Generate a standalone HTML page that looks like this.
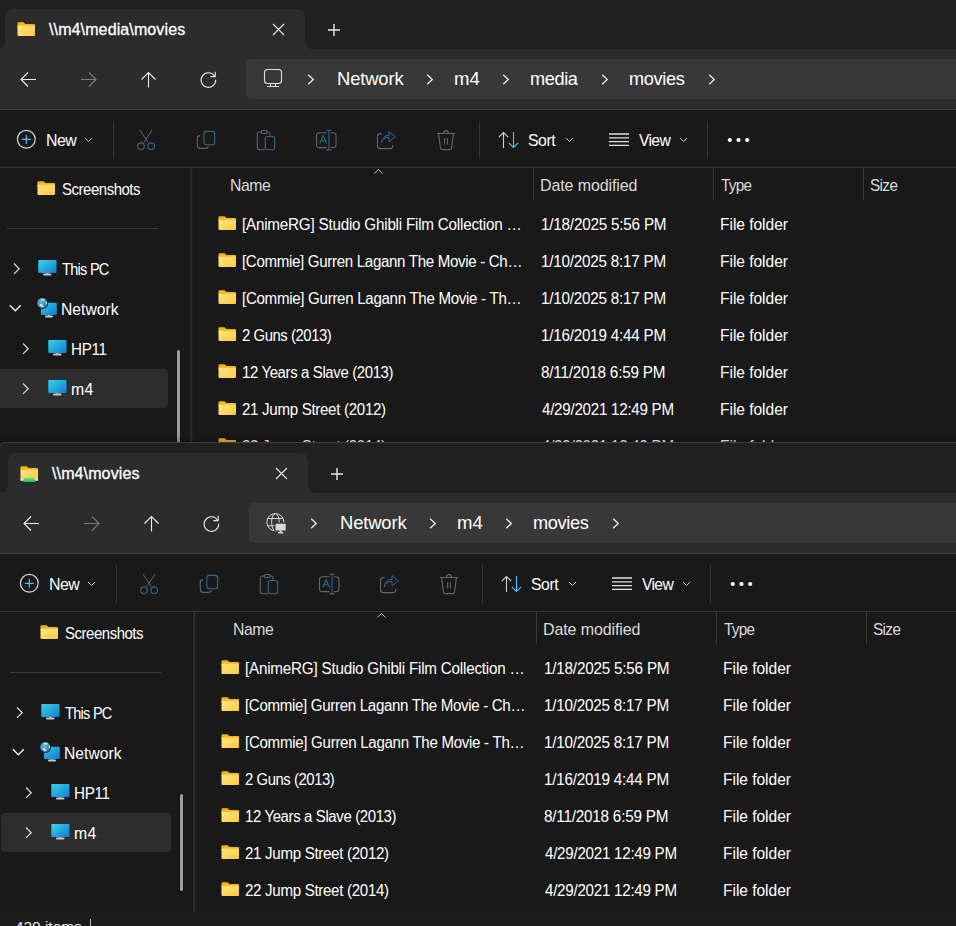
<!DOCTYPE html>
<html><head><meta charset="utf-8"><style>
html,body{margin:0;padding:0;width:956px;height:926px;overflow:hidden;background:#191919;}
.w{position:absolute;width:1100px;height:1100px;}
.b,.t,.s{position:absolute;}
.t{font-family:"Liberation Sans", sans-serif;white-space:pre;}
.s{overflow:visible;}
</style></head><body>
<div class="w" style="left:0px;top:0px"><div class="b" style="left:-5px;top:-2px;width:1100px;height:1100px;background:#202020;border-top:1px solid #3d3d3d;border-left:1px solid #3d3d3d;border-top-left-radius:8px;box-shadow:0 -2px 6px rgba(0,0,0,0.32);box-sizing:border-box"></div>
<div class="b" style="left:5px;top:9px;width:300px;height:40px;background:#2c2c2c;border-radius:8px 8px 0 0"></div>
<svg class="s" style="left:-3px;top:41px;" width="8" height="8" viewBox="0 0 8 8"><path d="M8 0 V8 H0 Q8 8 8 0Z" fill="#2c2c2c"/></svg>
<svg class="s" style="left:305px;top:41px;" width="8" height="8" viewBox="0 0 8 8"><path d="M0 0 V8 H8 Q0 8 0 0Z" fill="#2c2c2c"/></svg>
<svg class="s" style="left:17px;top:22px;" width="19" height="17" viewBox="0 0 19 17">
<defs><linearGradient id="fg0" x1="0" y1="0" x2="1" y2="1"><stop offset="0" stop-color="#ffe48e"/><stop offset="1" stop-color="#ffca38"/></linearGradient></defs>
<path d="M0.5 1.3 Q0.5 0.3 1.5 0.3 H6.6 L8.4 2.1 H17 Q18 2.1 18 3.1 V5 H0.5Z" fill="#f5b80a"/>
<path d="M0.5 3.7 H18 V13 Q18 14 17 14 H1.5 Q0.5 14 0.5 13Z" fill="url(#fg0)"/>
</svg>
<div class="t" style="left:49px;top:21.26px;font-size:16px;line-height:18.4px;color:#ffffff;font-weight:400;letter-spacing:0.12px;-webkit-text-stroke:0.3px #fff;">\\m4\media\movies</div>
<svg class="s" style="left:272px;top:23px;" width="13" height="13" viewBox="0 0 13 13"><path d="M1 1 L12 12 M12 1 L1 12" stroke="#e6e6e6" stroke-width="1.1"/></svg>
<svg class="s" style="left:328px;top:24px;" width="13" height="13" viewBox="0 0 13 13"><path d="M6 0 V12 M0 6 H12" stroke="#e6e6e6" stroke-width="1.4"/></svg>
<div class="b" style="left:-3px;top:49px;width:1100px;height:60px;background:#2c2c2c;"></div>
<div class="b" style="left:-3px;top:109px;width:1100px;height:1px;background:#3c3c3c;"></div>
<svg class="s" style="left:20px;top:71px;" width="17" height="16" viewBox="0 0 17 16"><path d="M1.5 8.5 H16 M8 1.5 L1 8.5 L8 15.5" stroke="#ececec" stroke-width="1.1" fill="none"/></svg>
<svg class="s" style="left:80px;top:71px;" width="17" height="16" viewBox="0 0 17 16"><path d="M15.5 8.5 H1 M9 1.5 L16 8.5 L9 15.5" stroke="#7a7a7a" stroke-width="1.1" fill="none"/></svg>
<svg class="s" style="left:140px;top:71px;" width="16" height="17" viewBox="0 0 16 17"><path d="M8.5 1.5 V16.5 M1.5 8.5 L8.5 1.5 L15.5 8.5" stroke="#ececec" stroke-width="1.1" fill="none"/></svg>
<svg class="s" style="left:199px;top:70px;" width="19" height="19" viewBox="0 0 19 19"><path d="M15.6 6.2 A7.3 7.3 0 1 0 16.7 9.6" stroke="#ececec" stroke-width="1.1" fill="none"/><path d="M16.2 1.8 V6.6 H11.4" stroke="#ececec" stroke-width="1.1" fill="none"/></svg>
<div class="b" style="left:246px;top:58.5px;width:900px;height:40px;background:#383838;border-radius:5px"></div>
<svg class="s" style="left:263px;top:68px;" width="20" height="20" viewBox="0 0 20 20"><g stroke="#e0e0e0" stroke-width="1.1" fill="none"><rect x="1.5" y="1.5" width="17" height="14" rx="3"/><path d="M7.5 15.5 V18.5 M12.5 15.5 V18.5 M4 18.5 H16"/></g></svg>
<svg class="s" style="left:307px;top:74px;" width="8" height="11" viewBox="0 0 8 11"><path d="M1.2 0.8 L6.3 5.5 L1.2 10.2" stroke="#ececec" stroke-width="1.3" fill="none"/></svg>
<div class="t" style="left:337.32px;top:67.86px;font-size:18.6px;line-height:21.39px;color:#ffffff;font-weight:400;letter-spacing:-0.143px;transform:scaleX(0.9896);transform-origin:0 0;">Network</div>
<svg class="s" style="left:426px;top:74px;" width="8" height="11" viewBox="0 0 8 11"><path d="M1.2 0.8 L6.3 5.5 L1.2 10.2" stroke="#ececec" stroke-width="1.3" fill="none"/></svg>
<div class="t" style="left:454.35px;top:67.86px;font-size:18.6px;line-height:21.39px;color:#ffffff;font-weight:400;letter-spacing:-0.056px;transform:scaleX(0.9981);transform-origin:0 0;">m4</div>
<svg class="s" style="left:502px;top:74px;" width="8" height="11" viewBox="0 0 8 11"><path d="M1.2 0.8 L6.3 5.5 L1.2 10.2" stroke="#ececec" stroke-width="1.3" fill="none"/></svg>
<div class="t" style="left:530.08px;top:67.86px;font-size:18.6px;line-height:21.39px;color:#ffffff;font-weight:400;letter-spacing:-0.38px;transform:scaleX(0.9755);transform-origin:0 0;">media</div>
<svg class="s" style="left:601px;top:74px;" width="8" height="11" viewBox="0 0 8 11"><path d="M1.2 0.8 L6.3 5.5 L1.2 10.2" stroke="#ececec" stroke-width="1.3" fill="none"/></svg>
<div class="t" style="left:628.78px;top:67.86px;font-size:18.6px;line-height:21.39px;color:#ffffff;font-weight:400;letter-spacing:-0.338px;transform:scaleX(0.9763);transform-origin:0 0;">movies</div>
<svg class="s" style="left:708px;top:74px;" width="8" height="11" viewBox="0 0 8 11"><path d="M1.2 0.8 L6.3 5.5 L1.2 10.2" stroke="#ececec" stroke-width="1.3" fill="none"/></svg>
<div class="b" style="left:-3px;top:110px;width:1100px;height:57px;background:#191919;"></div>
<div class="b" style="left:-3px;top:167px;width:1100px;height:1px;background:#393939;"></div>
<svg class="s" style="left:16px;top:129px;" width="21" height="21" viewBox="0 0 21 21"><circle cx="10.3" cy="10.3" r="8.9" stroke="#d6d6d6" stroke-width="1.2" fill="none"/><path d="M10.3 5.9 V14.7 M5.9 10.3 H14.7" stroke="#4cc2ff" stroke-width="1.2"/></svg>
<div class="t" style="left:46.39px;top:131.39px;font-size:16.4px;line-height:18.86px;color:#ffffff;font-weight:400;letter-spacing:-0.596px;transform:scaleX(0.9700);transform-origin:0 0;">New</div>
<svg class="s" style="left:84px;top:137px;" width="9" height="6" viewBox="0 0 9 6"><path d="M1 1 L4.5 4.5 L8 1" stroke="#c8c8c8" stroke-width="1" fill="none"/></svg>
<div class="b" style="left:113px;top:121px;width:1px;height:38px;background:#333333;"></div>
<svg class="s" style="left:136px;top:129px;" width="20" height="22" viewBox="0 0 20 22"><path d="M3.9 1 L12 13.3 M16.1 1 L8 13.3" stroke="#666666" stroke-width="1"/><circle cx="5" cy="17.2" r="3.3" stroke="#2f6a8e" stroke-width="1.1" fill="none"/><circle cx="15.2" cy="17.2" r="3.3" stroke="#2f6a8e" stroke-width="1.1" fill="none"/></svg>
<svg class="s" style="left:196px;top:130px;" width="20" height="20" viewBox="0 0 20 20"><path d="M4 5.6 Q1.3 5.8 1.3 8.6 V15.6 Q1.3 18.4 4.2 18.4 H9.5 Q12 18.4 12.3 16" stroke="#666666" stroke-width="1.1" fill="none"/><rect x="7.9" y="1.4" width="10.8" height="13.4" rx="2.6" stroke="#2f6a8e" stroke-width="1.1" fill="none"/></svg>
<svg class="s" style="left:256px;top:129px;" width="20" height="22" viewBox="0 0 20 22"><path d="M5 3 H3.2 Q1.3 3 1.3 5 V18.6 Q1.3 20.7 3.3 20.7 H8.7 M14 6.8 V5 Q14 3 12.2 3 H10.5" stroke="#666666" stroke-width="1.1" fill="none"/><rect x="5.2" y="1.5" width="6" height="3" rx="1.5" stroke="#666666" stroke-width="1.1" fill="none"/><rect x="9.2" y="7.5" width="9.5" height="13.2" rx="2.4" stroke="#2f6a8e" stroke-width="1.1" fill="none"/></svg>
<svg class="s" style="left:315px;top:129px;" width="22" height="22" viewBox="0 0 22 22"><path d="M11.5 18.6 H4.7 Q1.5 18.6 1.5 15.4 V7 Q1.5 3.8 4.7 3.8 H11.5 M16 3.8 H17.8 Q21 3.8 21 7 V15.4 Q21 18.6 17.8 18.6 H16" stroke="#666666" stroke-width="1.1" fill="none"/><path d="M4.8 14.5 L8.2 6.6 L11.6 14.5 M6.2 11.8 H10.3 M14 1.5 V20.8 M11.4 1.3 H16.6 M11.4 20.9 H16.6" stroke="#2f6a8e" stroke-width="1.1" fill="none"/></svg>
<svg class="s" style="left:376px;top:129px;" width="21" height="21" viewBox="0 0 21 21"><path d="M5.5 4.6 H4.2 Q1.5 4.6 1.5 7.3 V17 Q1.5 19.6 4.2 19.6 H14.1 Q16.8 19.6 16.8 17 V16" stroke="#666666" stroke-width="1.1" fill="none"/><path d="M5.3 13.8 Q7 8.2 13 8.3 V12.8 L19.4 7.8 L13 2.6 V6.3 Q6.6 6.6 5.3 13.8Z" stroke="#2f6a8e" stroke-width="1" fill="none" stroke-linejoin="round"/></svg>
<svg class="s" style="left:436px;top:129px;" width="20" height="22" viewBox="0 0 20 22"><path d="M1 4.5 H19 M7.6 4.3 Q7.6 1.6 10 1.6 Q12.4 1.6 12.4 4.3 M2.6 4.5 L4.4 19 Q4.6 20.6 6.2 20.6 H13.8 Q15.4 20.6 15.6 19 L17.4 4.5 M8.6 9.3 V15.6 M11.4 9.3 V15.6" stroke="#666666" stroke-width="1.1" fill="none"/></svg>
<div class="b" style="left:479px;top:121px;width:1px;height:38px;background:#333333;"></div>
<svg class="s" style="left:497px;top:131px;" width="24" height="18" viewBox="0 0 24 18"><path d="M6.5 17 V1.5 M1.8 6.2 L6.5 1.5 L11.2 6.2" stroke="#d0d0d0" stroke-width="1.1" fill="none"/><path d="M16.5 1 V16.5 M11.8 11.8 L16.5 16.5 L21.2 11.8" stroke="#4cc2ff" stroke-width="1.1" fill="none"/></svg>
<div class="t" style="left:528.48px;top:131.39px;font-size:16.4px;line-height:18.86px;color:#ffffff;font-weight:400;letter-spacing:-0.447px;transform:scaleX(0.9639);transform-origin:0 0;">Sort</div>
<svg class="s" style="left:565px;top:137px;" width="9" height="6" viewBox="0 0 9 6"><path d="M1 1 L4.5 4.5 L8 1" stroke="#c8c8c8" stroke-width="1" fill="none"/></svg>
<svg class="s" style="left:608px;top:132px;" width="22" height="16" viewBox="0 0 22 16"><path d="M1 2 H21 M1 5.8 H21 M1 9.6 H21 M1 13.4 H21" stroke="#e0e0e0" stroke-width="1.3"/></svg>
<div class="t" style="left:639.1px;top:131.39px;font-size:16.4px;line-height:18.86px;color:#ffffff;font-weight:400;letter-spacing:-0.682px;transform:scaleX(0.9547);transform-origin:0 0;">View</div>
<svg class="s" style="left:679px;top:137px;" width="9" height="6" viewBox="0 0 9 6"><path d="M1 1 L4.5 4.5 L8 1" stroke="#c8c8c8" stroke-width="1" fill="none"/></svg>
<div class="b" style="left:707px;top:121px;width:1px;height:38px;background:#333333;"></div>
<svg class="s" style="left:727px;top:137px;" width="23" height="6" viewBox="0 0 23 6"><circle cx="2.8" cy="3" r="2.1" fill="#ffffff"/><circle cx="11.5" cy="3" r="2.1" fill="#ffffff"/><circle cx="20.2" cy="3" r="2.1" fill="#ffffff"/></svg>
<div class="b" style="left:-3px;top:168px;width:1100px;height:1000px;background:#191919;"></div>
<div class="b" style="left:189px;top:168px;width:1px;height:1000px;background:#161616;"></div>
<div class="b" style="left:190px;top:168px;width:2px;height:1000px;background:#2a2a2a;"></div>
<div class="b" style="left:192px;top:168px;width:2px;height:1000px;background:#1e1e1e;"></div>
<svg class="s" style="left:37px;top:181px;" width="19" height="17" viewBox="0 0 19 17">
<defs><linearGradient id="fg0" x1="0" y1="0" x2="1" y2="1"><stop offset="0" stop-color="#ffe48e"/><stop offset="1" stop-color="#ffca38"/></linearGradient></defs>
<path d="M0.5 1.3 Q0.5 0.3 1.5 0.3 H6.6 L8.4 2.1 H17 Q18 2.1 18 3.1 V5 H0.5Z" fill="#f5b80a"/>
<path d="M0.5 3.7 H18 V13 Q18 14 17 14 H1.5 Q0.5 14 0.5 13Z" fill="url(#fg0)"/>
</svg>
<div class="t" style="left:61.58px;top:181.12px;font-size:15.6px;line-height:17.94px;color:#ffffff;font-weight:400;letter-spacing:-0.465px;transform:scaleX(0.9574);transform-origin:0 0;">Screenshots</div>
<div class="b" style="left:7px;top:228px;width:151px;height:1px;background:#3a3a3a;"></div>
<svg class="s" style="left:12px;top:262px;" width="10" height="14" viewBox="0 0 10 14"><path d="M2 1.5 L7.2 6.7 L2 11.9" stroke="#d4d4d4" stroke-width="1.3" fill="none"/></svg>
<svg class="s" style="left:37.5px;top:260px;" width="19" height="16" viewBox="0 0 19 16">
<defs><linearGradient id="mg" x1="0" y1="0" x2="1" y2="1"><stop offset="0" stop-color="#38d4ea"/><stop offset="1" stop-color="#137ad0"/></linearGradient></defs>
<rect x="0.3" y="0" width="18.2" height="13" rx="0.8" fill="url(#mg)"/>
<rect x="8.3" y="13" width="2" height="1.5" fill="#b8b8b8"/>
<rect x="5" y="13.6" width="8.5" height="2" rx="1" fill="#c8c8c8"/></svg>
<div class="t" style="left:62.07px;top:261.12px;font-size:15.6px;line-height:17.94px;color:#ffffff;font-weight:400;letter-spacing:-0.785px;transform:scaleX(0.9339);transform-origin:0 0;">This PC</div>
<svg class="s" style="left:8px;top:303px;" width="14" height="10" viewBox="0 0 14 10"><path d="M1.8 2.2 L7.3 7.7 L12.8 2.2" stroke="#ececec" stroke-width="1.4" fill="none"/></svg>
<svg class="s" style="left:37px;top:298px;" width="21" height="21" viewBox="0 0 21 21">
<defs><linearGradient id="ng" x1="0" y1="0" x2="1" y2="1"><stop offset="0" stop-color="#2fc6e6"/><stop offset="1" stop-color="#137ad0"/></linearGradient>
<radialGradient id="gl" cx="0.4" cy="0.35" r="0.7"><stop offset="0" stop-color="#6ab8e0"/><stop offset="1" stop-color="#2b76a8"/></radialGradient></defs>
<rect x="4" y="4.8" width="15.8" height="12.2" rx="0.8" fill="url(#ng)"/>
<rect x="11" y="17" width="1.6" height="1.5" fill="#b8b8b8"/>
<rect x="8" y="17.4" width="8" height="2" rx="1" fill="#c8c8c8"/>
<circle cx="5.6" cy="5.4" r="5.4" fill="#1a1a1a"/>
<circle cx="5.3" cy="5.2" r="5.1" fill="url(#gl)"/>
<path d="M2.5 6.5 Q4 5.5 5.5 7 L6.5 9 Q4.5 9.5 2.5 7.5Z M4 1 Q6 0.6 8 1.5 L7 2.8 Q5.5 2 4 2.2Z M8.8 3 L10 4.5 L9.5 6.5 L8.6 5Z" fill="#e8f2f8" opacity="0.9"/></svg>
<div class="t" style="left:61.04px;top:301.12px;font-size:15.6px;line-height:17.94px;color:#ffffff;font-weight:400;letter-spacing:0.046px;transform:scaleX(1.0040);transform-origin:0 0;">Network</div>
<div class="b" style="left:-2px;top:368.5px;width:170px;height:39px;background:#2d2d2d;border-radius:4px"></div>
<svg class="s" style="left:21px;top:342px;" width="10" height="14" viewBox="0 0 10 14"><path d="M2 1.5 L7.2 6.7 L2 11.9" stroke="#d4d4d4" stroke-width="1.3" fill="none"/></svg>
<svg class="s" style="left:47.5px;top:340px;" width="19" height="16" viewBox="0 0 19 16">
<defs><linearGradient id="mg" x1="0" y1="0" x2="1" y2="1"><stop offset="0" stop-color="#38d4ea"/><stop offset="1" stop-color="#137ad0"/></linearGradient></defs>
<rect x="0.3" y="0" width="18.2" height="13" rx="0.8" fill="url(#mg)"/>
<rect x="8.3" y="13" width="2" height="1.5" fill="#b8b8b8"/>
<rect x="5" y="13.6" width="8.5" height="2" rx="1" fill="#c8c8c8"/></svg>
<div class="t" style="left:70.98px;top:341.12px;font-size:15.6px;line-height:17.94px;color:#ffffff;font-weight:400;letter-spacing:-0.357px;transform:scaleX(0.9762);transform-origin:0 0;">HP11</div>
<svg class="s" style="left:21px;top:382px;" width="10" height="14" viewBox="0 0 10 14"><path d="M2 1.5 L7.2 6.7 L2 11.9" stroke="#d4d4d4" stroke-width="1.3" fill="none"/></svg>
<svg class="s" style="left:47.5px;top:380px;" width="19" height="16" viewBox="0 0 19 16">
<defs><linearGradient id="mg" x1="0" y1="0" x2="1" y2="1"><stop offset="0" stop-color="#38d4ea"/><stop offset="1" stop-color="#137ad0"/></linearGradient></defs>
<rect x="0.3" y="0" width="18.2" height="13" rx="0.8" fill="url(#mg)"/>
<rect x="8.3" y="13" width="2" height="1.5" fill="#b8b8b8"/>
<rect x="5" y="13.6" width="8.5" height="2" rx="1" fill="#c8c8c8"/></svg>
<div class="t" style="left:71.19px;top:381.12px;font-size:15.6px;line-height:17.94px;color:#ffffff;font-weight:400;letter-spacing:0.352px;transform:scaleX(1.0144);transform-origin:0 0;">m4</div>
<div class="b" style="left:177px;top:350px;width:3px;height:97px;background:#9c9c9c;border-radius:1.5px"></div>
<svg class="s" style="left:373px;top:168px;" width="12" height="7" viewBox="0 0 12 7"><path d="M1.2 5.6 L5.4 1.4 L9.6 5.6" stroke="#b8b8b8" stroke-width="1" fill="none"/></svg>
<div class="t" style="left:230.38px;top:175.57px;font-size:16.2px;line-height:18.63px;color:#d9d9d9;font-weight:400;letter-spacing:-0.442px;transform:scaleX(0.9743);transform-origin:0 0;">Name</div>
<div class="b" style="left:533px;top:168px;width:1px;height:32px;background:#393939;"></div>
<div class="t" style="left:540.36px;top:175.57px;font-size:16.2px;line-height:18.63px;color:#d9d9d9;font-weight:400;letter-spacing:-0.109px;transform:scaleX(0.9892);transform-origin:0 0;">Date modified</div>
<div class="b" style="left:713px;top:168px;width:1px;height:32px;background:#393939;"></div>
<div class="t" style="left:721.26px;top:175.57px;font-size:16.2px;line-height:18.63px;color:#d9d9d9;font-weight:400;letter-spacing:-0.805px;transform:scaleX(0.9455);transform-origin:0 0;">Type</div>
<div class="b" style="left:863px;top:168px;width:1px;height:32px;background:#393939;"></div>
<div class="t" style="left:870.39px;top:175.57px;font-size:16.2px;line-height:18.63px;color:#d9d9d9;font-weight:400;letter-spacing:-0.677px;transform:scaleX(0.9475);transform-origin:0 0;">Size</div>
<svg class="s" style="left:217.5px;top:215.5px;" width="19" height="17" viewBox="0 0 19 17">
<defs><linearGradient id="fg0" x1="0" y1="0" x2="1" y2="1"><stop offset="0" stop-color="#ffe48e"/><stop offset="1" stop-color="#ffca38"/></linearGradient></defs>
<path d="M0.5 1.3 Q0.5 0.3 1.5 0.3 H6.6 L8.4 2.1 H17 Q18 2.1 18 3.1 V5 H0.5Z" fill="#f5b80a"/>
<path d="M0.5 3.7 H18 V13 Q18 14 17 14 H1.5 Q0.5 14 0.5 13Z" fill="url(#fg0)"/>
</svg>
<div class="t" style="left:241.92px;top:215.62px;font-size:15.6px;line-height:17.94px;color:#ffffff;font-weight:400;letter-spacing:-0.221px;transform:scaleX(0.9758);transform-origin:0 0;">[AnimeRG] Studio Ghibli Film Collection …</div>
<div class="t" style="left:540.68px;top:215.62px;font-size:15.6px;line-height:17.94px;color:#ffffff;font-weight:400;letter-spacing:-0.216px;transform:scaleX(0.9786);transform-origin:0 0;">1/18/2025 5:56 PM</div>
<div class="t" style="left:720.25px;top:215.62px;font-size:15.6px;line-height:17.94px;color:#ffffff;font-weight:400;letter-spacing:-0.028px;transform:scaleX(0.9966);transform-origin:0 0;">File folder</div>
<svg class="s" style="left:217.5px;top:252.5px;" width="19" height="17" viewBox="0 0 19 17">
<defs><linearGradient id="fg0" x1="0" y1="0" x2="1" y2="1"><stop offset="0" stop-color="#ffe48e"/><stop offset="1" stop-color="#ffca38"/></linearGradient></defs>
<path d="M0.5 1.3 Q0.5 0.3 1.5 0.3 H6.6 L8.4 2.1 H17 Q18 2.1 18 3.1 V5 H0.5Z" fill="#f5b80a"/>
<path d="M0.5 3.7 H18 V13 Q18 14 17 14 H1.5 Q0.5 14 0.5 13Z" fill="url(#fg0)"/>
</svg>
<div class="t" style="left:241.93px;top:252.62px;font-size:15.6px;line-height:17.94px;color:#ffffff;font-weight:400;letter-spacing:-0.332px;transform:scaleX(0.9675);transform-origin:0 0;">[Commie] Gurren Lagann The Movie - Ch…</div>
<div class="t" style="left:540.68px;top:252.62px;font-size:15.6px;line-height:17.94px;color:#ffffff;font-weight:400;letter-spacing:-0.227px;transform:scaleX(0.9775);transform-origin:0 0;">1/10/2025 8:17 PM</div>
<div class="t" style="left:720.25px;top:252.62px;font-size:15.6px;line-height:17.94px;color:#ffffff;font-weight:400;letter-spacing:-0.028px;transform:scaleX(0.9966);transform-origin:0 0;">File folder</div>
<svg class="s" style="left:217.5px;top:289.5px;" width="19" height="17" viewBox="0 0 19 17">
<defs><linearGradient id="fg0" x1="0" y1="0" x2="1" y2="1"><stop offset="0" stop-color="#ffe48e"/><stop offset="1" stop-color="#ffca38"/></linearGradient></defs>
<path d="M0.5 1.3 Q0.5 0.3 1.5 0.3 H6.6 L8.4 2.1 H17 Q18 2.1 18 3.1 V5 H0.5Z" fill="#f5b80a"/>
<path d="M0.5 3.7 H18 V13 Q18 14 17 14 H1.5 Q0.5 14 0.5 13Z" fill="url(#fg0)"/>
</svg>
<div class="t" style="left:241.93px;top:289.62px;font-size:15.6px;line-height:17.94px;color:#ffffff;font-weight:400;letter-spacing:-0.314px;transform:scaleX(0.9690);transform-origin:0 0;">[Commie] Gurren Lagann The Movie - Th…</div>
<div class="t" style="left:540.68px;top:289.62px;font-size:15.6px;line-height:17.94px;color:#ffffff;font-weight:400;letter-spacing:-0.227px;transform:scaleX(0.9775);transform-origin:0 0;">1/10/2025 8:17 PM</div>
<div class="t" style="left:720.25px;top:289.62px;font-size:15.6px;line-height:17.94px;color:#ffffff;font-weight:400;letter-spacing:-0.028px;transform:scaleX(0.9966);transform-origin:0 0;">File folder</div>
<svg class="s" style="left:217.5px;top:326.5px;" width="19" height="17" viewBox="0 0 19 17">
<defs><linearGradient id="fg0" x1="0" y1="0" x2="1" y2="1"><stop offset="0" stop-color="#ffe48e"/><stop offset="1" stop-color="#ffca38"/></linearGradient></defs>
<path d="M0.5 1.3 Q0.5 0.3 1.5 0.3 H6.6 L8.4 2.1 H17 Q18 2.1 18 3.1 V5 H0.5Z" fill="#f5b80a"/>
<path d="M0.5 3.7 H18 V13 Q18 14 17 14 H1.5 Q0.5 14 0.5 13Z" fill="url(#fg0)"/>
</svg>
<div class="t" style="left:242.18px;top:326.62px;font-size:15.6px;line-height:17.94px;color:#ffffff;font-weight:400;letter-spacing:-0.47px;transform:scaleX(0.9550);transform-origin:0 0;">2 Guns (2013)</div>
<div class="t" style="left:540.68px;top:326.62px;font-size:15.6px;line-height:17.94px;color:#ffffff;font-weight:400;letter-spacing:-0.234px;transform:scaleX(0.9768);transform-origin:0 0;">1/16/2019 4:44 PM</div>
<div class="t" style="left:720.25px;top:326.62px;font-size:15.6px;line-height:17.94px;color:#ffffff;font-weight:400;letter-spacing:-0.028px;transform:scaleX(0.9966);transform-origin:0 0;">File folder</div>
<svg class="s" style="left:217.5px;top:363.5px;" width="19" height="17" viewBox="0 0 19 17">
<defs><linearGradient id="fg0" x1="0" y1="0" x2="1" y2="1"><stop offset="0" stop-color="#ffe48e"/><stop offset="1" stop-color="#ffca38"/></linearGradient></defs>
<path d="M0.5 1.3 Q0.5 0.3 1.5 0.3 H6.6 L8.4 2.1 H17 Q18 2.1 18 3.1 V5 H0.5Z" fill="#f5b80a"/>
<path d="M0.5 3.7 H18 V13 Q18 14 17 14 H1.5 Q0.5 14 0.5 13Z" fill="url(#fg0)"/>
</svg>
<div class="t" style="left:241.7px;top:363.62px;font-size:15.6px;line-height:17.94px;color:#ffffff;font-weight:400;letter-spacing:-0.387px;transform:scaleX(0.9593);transform-origin:0 0;">12 Years a Slave (2013)</div>
<div class="t" style="left:541.17px;top:363.62px;font-size:15.6px;line-height:17.94px;color:#ffffff;font-weight:400;letter-spacing:-0.216px;transform:scaleX(0.9785);transform-origin:0 0;">8/11/2018 6:59 PM</div>
<div class="t" style="left:720.25px;top:363.62px;font-size:15.6px;line-height:17.94px;color:#ffffff;font-weight:400;letter-spacing:-0.028px;transform:scaleX(0.9966);transform-origin:0 0;">File folder</div>
<svg class="s" style="left:217.5px;top:400.5px;" width="19" height="17" viewBox="0 0 19 17">
<defs><linearGradient id="fg0" x1="0" y1="0" x2="1" y2="1"><stop offset="0" stop-color="#ffe48e"/><stop offset="1" stop-color="#ffca38"/></linearGradient></defs>
<path d="M0.5 1.3 Q0.5 0.3 1.5 0.3 H6.6 L8.4 2.1 H17 Q18 2.1 18 3.1 V5 H0.5Z" fill="#f5b80a"/>
<path d="M0.5 3.7 H18 V13 Q18 14 17 14 H1.5 Q0.5 14 0.5 13Z" fill="url(#fg0)"/>
</svg>
<div class="t" style="left:242.17px;top:400.62px;font-size:15.6px;line-height:17.94px;color:#ffffff;font-weight:400;letter-spacing:-0.313px;transform:scaleX(0.9677);transform-origin:0 0;">21 Jump Street (2012)</div>
<div class="t" style="left:541.66px;top:400.62px;font-size:15.6px;line-height:17.94px;color:#ffffff;font-weight:400;letter-spacing:-0.276px;transform:scaleX(0.9731);transform-origin:0 0;">4/29/2021 12:49 PM</div>
<div class="t" style="left:720.25px;top:400.62px;font-size:15.6px;line-height:17.94px;color:#ffffff;font-weight:400;letter-spacing:-0.028px;transform:scaleX(0.9966);transform-origin:0 0;">File folder</div>
<svg class="s" style="left:217.5px;top:437.5px;" width="19" height="17" viewBox="0 0 19 17">
<defs><linearGradient id="fg0" x1="0" y1="0" x2="1" y2="1"><stop offset="0" stop-color="#ffe48e"/><stop offset="1" stop-color="#ffca38"/></linearGradient></defs>
<path d="M0.5 1.3 Q0.5 0.3 1.5 0.3 H6.6 L8.4 2.1 H17 Q18 2.1 18 3.1 V5 H0.5Z" fill="#f5b80a"/>
<path d="M0.5 3.7 H18 V13 Q18 14 17 14 H1.5 Q0.5 14 0.5 13Z" fill="url(#fg0)"/>
</svg>
<div class="t" style="left:242.17px;top:437.62px;font-size:15.6px;line-height:17.94px;color:#ffffff;font-weight:400;letter-spacing:-0.313px;transform:scaleX(0.9677);transform-origin:0 0;">22 Jump Street (2014)</div>
<div class="t" style="left:541.66px;top:437.62px;font-size:15.6px;line-height:17.94px;color:#ffffff;font-weight:400;letter-spacing:-0.276px;transform:scaleX(0.9731);transform-origin:0 0;">4/29/2021 12:49 PM</div>
<div class="t" style="left:720.25px;top:437.62px;font-size:15.6px;line-height:17.94px;color:#ffffff;font-weight:400;letter-spacing:-0.028px;transform:scaleX(0.9966);transform-origin:0 0;">File folder</div></div>
<div class="w" style="left:3px;top:444px"><div class="b" style="left:-5px;top:-2px;width:1100px;height:1100px;background:#202020;border-top:1px solid #3d3d3d;border-left:1px solid #3d3d3d;border-top-left-radius:8px;box-shadow:0 -2px 6px rgba(0,0,0,0.32);box-sizing:border-box"></div>
<div class="b" style="left:5px;top:9px;width:300px;height:40px;background:#2c2c2c;border-radius:8px 8px 0 0"></div>
<svg class="s" style="left:-3px;top:41px;" width="8" height="8" viewBox="0 0 8 8"><path d="M8 0 V8 H0 Q8 8 8 0Z" fill="#2c2c2c"/></svg>
<svg class="s" style="left:305px;top:41px;" width="8" height="8" viewBox="0 0 8 8"><path d="M0 0 V8 H8 Q0 8 0 0Z" fill="#2c2c2c"/></svg>
<svg class="s" style="left:17px;top:22px;" width="19" height="17" viewBox="0 0 19 17">
<defs><linearGradient id="fg1" x1="0" y1="0" x2="1" y2="1"><stop offset="0" stop-color="#ffe48e"/><stop offset="1" stop-color="#ffca38"/></linearGradient></defs>
<path d="M0.5 1.3 Q0.5 0.3 1.5 0.3 H6.6 L8.4 2.1 H17 Q18 2.1 18 3.1 V5 H0.5Z" fill="#f5b80a"/>
<path d="M0.5 3.7 H18 V13 Q18 14 17 14 H1.5 Q0.5 14 0.5 13Z" fill="url(#fg1)"/>
<rect x="0.5" y="12.6" width="17.5" height="2.2" fill="#ececec"/><defs><linearGradient id="gg" x1="0" y1="0" x2="0" y2="1"><stop offset="0" stop-color="#62f27e"/><stop offset="1" stop-color="#25b447"/></linearGradient></defs><rect x="3.4" y="11.8" width="11.8" height="4.3" rx="0.6" fill="url(#gg)"/></svg>
<div class="t" style="left:49px;top:21.26px;font-size:16px;line-height:18.4px;color:#ffffff;font-weight:400;letter-spacing:0.12px;-webkit-text-stroke:0.3px #fff;">\\m4\movies</div>
<svg class="s" style="left:272px;top:23px;" width="13" height="13" viewBox="0 0 13 13"><path d="M1 1 L12 12 M12 1 L1 12" stroke="#e6e6e6" stroke-width="1.1"/></svg>
<svg class="s" style="left:328px;top:24px;" width="13" height="13" viewBox="0 0 13 13"><path d="M6 0 V12 M0 6 H12" stroke="#e6e6e6" stroke-width="1.4"/></svg>
<div class="b" style="left:-3px;top:49px;width:1100px;height:60px;background:#2c2c2c;"></div>
<div class="b" style="left:-3px;top:109px;width:1100px;height:1px;background:#3c3c3c;"></div>
<svg class="s" style="left:20px;top:71px;" width="17" height="16" viewBox="0 0 17 16"><path d="M1.5 8.5 H16 M8 1.5 L1 8.5 L8 15.5" stroke="#ececec" stroke-width="1.1" fill="none"/></svg>
<svg class="s" style="left:80px;top:71px;" width="17" height="16" viewBox="0 0 17 16"><path d="M15.5 8.5 H1 M9 1.5 L16 8.5 L9 15.5" stroke="#7a7a7a" stroke-width="1.1" fill="none"/></svg>
<svg class="s" style="left:140px;top:71px;" width="16" height="17" viewBox="0 0 16 17"><path d="M8.5 1.5 V16.5 M1.5 8.5 L8.5 1.5 L15.5 8.5" stroke="#ececec" stroke-width="1.1" fill="none"/></svg>
<svg class="s" style="left:199px;top:70px;" width="19" height="19" viewBox="0 0 19 19"><path d="M15.6 6.2 A7.3 7.3 0 1 0 16.7 9.6" stroke="#ececec" stroke-width="1.1" fill="none"/><path d="M16.2 1.8 V6.6 H11.4" stroke="#ececec" stroke-width="1.1" fill="none"/></svg>
<div class="b" style="left:246px;top:58.5px;width:900px;height:40px;background:#383838;border-radius:5px"></div>
<svg class="s" style="left:263px;top:69px;" width="24" height="22" viewBox="0 0 24 22"><g stroke="#d6d6d6" stroke-width="1" fill="none">
<circle cx="9.4" cy="9.2" r="8.6"/><ellipse cx="9.4" cy="9.2" rx="3.8" ry="8.6"/><path d="M1.5 5.5 H17.3 M1.2 12.8 H12"/></g>
<rect x="8.3" y="9.6" width="12.6" height="9" rx="1" fill="#383838"/>
<rect x="9.5" y="10.7" width="10.2" height="6.8" rx="0.8" fill="#d6d6d6"/>
<rect x="13.6" y="17.3" width="2" height="2" fill="#d6d6d6"/><rect x="12" y="19" width="5.2" height="1.5" fill="#d6d6d6"/></svg>
<svg class="s" style="left:307px;top:74px;" width="8" height="11" viewBox="0 0 8 11"><path d="M1.2 0.8 L6.3 5.5 L1.2 10.2" stroke="#ececec" stroke-width="1.3" fill="none"/></svg>
<div class="t" style="left:336.82px;top:67.86px;font-size:18.6px;line-height:21.39px;color:#ffffff;font-weight:400;letter-spacing:-0.143px;transform:scaleX(0.9896);transform-origin:0 0;">Network</div>
<svg class="s" style="left:425.5px;top:74px;" width="8" height="11" viewBox="0 0 8 11"><path d="M1.2 0.8 L6.3 5.5 L1.2 10.2" stroke="#ececec" stroke-width="1.3" fill="none"/></svg>
<div class="t" style="left:454.45px;top:67.86px;font-size:18.6px;line-height:21.39px;color:#ffffff;font-weight:400;letter-spacing:-0.056px;transform:scaleX(0.9981);transform-origin:0 0;">m4</div>
<svg class="s" style="left:502px;top:74px;" width="8" height="11" viewBox="0 0 8 11"><path d="M1.2 0.8 L6.3 5.5 L1.2 10.2" stroke="#ececec" stroke-width="1.3" fill="none"/></svg>
<div class="t" style="left:530.18px;top:67.86px;font-size:18.6px;line-height:21.39px;color:#ffffff;font-weight:400;letter-spacing:-0.338px;transform:scaleX(0.9763);transform-origin:0 0;">movies</div>
<svg class="s" style="left:608.5px;top:74px;" width="8" height="11" viewBox="0 0 8 11"><path d="M1.2 0.8 L6.3 5.5 L1.2 10.2" stroke="#ececec" stroke-width="1.3" fill="none"/></svg>
<div class="b" style="left:-3px;top:110px;width:1100px;height:57px;background:#191919;"></div>
<div class="b" style="left:-3px;top:167px;width:1100px;height:1px;background:#393939;"></div>
<svg class="s" style="left:16px;top:129px;" width="21" height="21" viewBox="0 0 21 21"><circle cx="10.3" cy="10.3" r="8.9" stroke="#d6d6d6" stroke-width="1.2" fill="none"/><path d="M10.3 5.9 V14.7 M5.9 10.3 H14.7" stroke="#4cc2ff" stroke-width="1.2"/></svg>
<div class="t" style="left:46.39px;top:131.39px;font-size:16.4px;line-height:18.86px;color:#ffffff;font-weight:400;letter-spacing:-0.596px;transform:scaleX(0.9700);transform-origin:0 0;">New</div>
<svg class="s" style="left:84px;top:137px;" width="9" height="6" viewBox="0 0 9 6"><path d="M1 1 L4.5 4.5 L8 1" stroke="#c8c8c8" stroke-width="1" fill="none"/></svg>
<div class="b" style="left:113px;top:121px;width:1px;height:38px;background:#333333;"></div>
<svg class="s" style="left:136px;top:129px;" width="20" height="22" viewBox="0 0 20 22"><path d="M3.9 1 L12 13.3 M16.1 1 L8 13.3" stroke="#666666" stroke-width="1"/><circle cx="5" cy="17.2" r="3.3" stroke="#2f6a8e" stroke-width="1.1" fill="none"/><circle cx="15.2" cy="17.2" r="3.3" stroke="#2f6a8e" stroke-width="1.1" fill="none"/></svg>
<svg class="s" style="left:196px;top:130px;" width="20" height="20" viewBox="0 0 20 20"><path d="M4 5.6 Q1.3 5.8 1.3 8.6 V15.6 Q1.3 18.4 4.2 18.4 H9.5 Q12 18.4 12.3 16" stroke="#666666" stroke-width="1.1" fill="none"/><rect x="7.9" y="1.4" width="10.8" height="13.4" rx="2.6" stroke="#2f6a8e" stroke-width="1.1" fill="none"/></svg>
<svg class="s" style="left:256px;top:129px;" width="20" height="22" viewBox="0 0 20 22"><path d="M5 3 H3.2 Q1.3 3 1.3 5 V18.6 Q1.3 20.7 3.3 20.7 H8.7 M14 6.8 V5 Q14 3 12.2 3 H10.5" stroke="#666666" stroke-width="1.1" fill="none"/><rect x="5.2" y="1.5" width="6" height="3" rx="1.5" stroke="#666666" stroke-width="1.1" fill="none"/><rect x="9.2" y="7.5" width="9.5" height="13.2" rx="2.4" stroke="#2f6a8e" stroke-width="1.1" fill="none"/></svg>
<svg class="s" style="left:315px;top:129px;" width="22" height="22" viewBox="0 0 22 22"><path d="M11.5 18.6 H4.7 Q1.5 18.6 1.5 15.4 V7 Q1.5 3.8 4.7 3.8 H11.5 M16 3.8 H17.8 Q21 3.8 21 7 V15.4 Q21 18.6 17.8 18.6 H16" stroke="#666666" stroke-width="1.1" fill="none"/><path d="M4.8 14.5 L8.2 6.6 L11.6 14.5 M6.2 11.8 H10.3 M14 1.5 V20.8 M11.4 1.3 H16.6 M11.4 20.9 H16.6" stroke="#2f6a8e" stroke-width="1.1" fill="none"/></svg>
<svg class="s" style="left:376px;top:129px;" width="21" height="21" viewBox="0 0 21 21"><path d="M5.5 4.6 H4.2 Q1.5 4.6 1.5 7.3 V17 Q1.5 19.6 4.2 19.6 H14.1 Q16.8 19.6 16.8 17 V16" stroke="#666666" stroke-width="1.1" fill="none"/><path d="M5.3 13.8 Q7 8.2 13 8.3 V12.8 L19.4 7.8 L13 2.6 V6.3 Q6.6 6.6 5.3 13.8Z" stroke="#2f6a8e" stroke-width="1" fill="none" stroke-linejoin="round"/></svg>
<svg class="s" style="left:436px;top:129px;" width="20" height="22" viewBox="0 0 20 22"><path d="M1 4.5 H19 M7.6 4.3 Q7.6 1.6 10 1.6 Q12.4 1.6 12.4 4.3 M2.6 4.5 L4.4 19 Q4.6 20.6 6.2 20.6 H13.8 Q15.4 20.6 15.6 19 L17.4 4.5 M8.6 9.3 V15.6 M11.4 9.3 V15.6" stroke="#666666" stroke-width="1.1" fill="none"/></svg>
<div class="b" style="left:479px;top:121px;width:1px;height:38px;background:#333333;"></div>
<svg class="s" style="left:497px;top:131px;" width="24" height="18" viewBox="0 0 24 18"><path d="M6.5 17 V1.5 M1.8 6.2 L6.5 1.5 L11.2 6.2" stroke="#d0d0d0" stroke-width="1.1" fill="none"/><path d="M16.5 1 V16.5 M11.8 11.8 L16.5 16.5 L21.2 11.8" stroke="#4cc2ff" stroke-width="1.1" fill="none"/></svg>
<div class="t" style="left:528.48px;top:131.39px;font-size:16.4px;line-height:18.86px;color:#ffffff;font-weight:400;letter-spacing:-0.447px;transform:scaleX(0.9639);transform-origin:0 0;">Sort</div>
<svg class="s" style="left:565px;top:137px;" width="9" height="6" viewBox="0 0 9 6"><path d="M1 1 L4.5 4.5 L8 1" stroke="#c8c8c8" stroke-width="1" fill="none"/></svg>
<svg class="s" style="left:608px;top:132px;" width="22" height="16" viewBox="0 0 22 16"><path d="M1 2 H21 M1 5.8 H21 M1 9.6 H21 M1 13.4 H21" stroke="#e0e0e0" stroke-width="1.3"/></svg>
<div class="t" style="left:639.1px;top:131.39px;font-size:16.4px;line-height:18.86px;color:#ffffff;font-weight:400;letter-spacing:-0.682px;transform:scaleX(0.9547);transform-origin:0 0;">View</div>
<svg class="s" style="left:679px;top:137px;" width="9" height="6" viewBox="0 0 9 6"><path d="M1 1 L4.5 4.5 L8 1" stroke="#c8c8c8" stroke-width="1" fill="none"/></svg>
<div class="b" style="left:707px;top:121px;width:1px;height:38px;background:#333333;"></div>
<svg class="s" style="left:727px;top:137px;" width="23" height="6" viewBox="0 0 23 6"><circle cx="2.8" cy="3" r="2.1" fill="#ffffff"/><circle cx="11.5" cy="3" r="2.1" fill="#ffffff"/><circle cx="20.2" cy="3" r="2.1" fill="#ffffff"/></svg>
<div class="b" style="left:-3px;top:168px;width:1100px;height:1000px;background:#191919;"></div>
<div class="b" style="left:189px;top:168px;width:1px;height:1000px;background:#161616;"></div>
<div class="b" style="left:190px;top:168px;width:2px;height:1000px;background:#2a2a2a;"></div>
<div class="b" style="left:192px;top:168px;width:2px;height:1000px;background:#1e1e1e;"></div>
<svg class="s" style="left:37px;top:181px;" width="19" height="17" viewBox="0 0 19 17">
<defs><linearGradient id="fg0" x1="0" y1="0" x2="1" y2="1"><stop offset="0" stop-color="#ffe48e"/><stop offset="1" stop-color="#ffca38"/></linearGradient></defs>
<path d="M0.5 1.3 Q0.5 0.3 1.5 0.3 H6.6 L8.4 2.1 H17 Q18 2.1 18 3.1 V5 H0.5Z" fill="#f5b80a"/>
<path d="M0.5 3.7 H18 V13 Q18 14 17 14 H1.5 Q0.5 14 0.5 13Z" fill="url(#fg0)"/>
</svg>
<div class="t" style="left:61.58px;top:181.12px;font-size:15.6px;line-height:17.94px;color:#ffffff;font-weight:400;letter-spacing:-0.465px;transform:scaleX(0.9574);transform-origin:0 0;">Screenshots</div>
<div class="b" style="left:7px;top:228px;width:151px;height:1px;background:#3a3a3a;"></div>
<svg class="s" style="left:12px;top:262px;" width="10" height="14" viewBox="0 0 10 14"><path d="M2 1.5 L7.2 6.7 L2 11.9" stroke="#d4d4d4" stroke-width="1.3" fill="none"/></svg>
<svg class="s" style="left:37.5px;top:260px;" width="19" height="16" viewBox="0 0 19 16">
<defs><linearGradient id="mg" x1="0" y1="0" x2="1" y2="1"><stop offset="0" stop-color="#38d4ea"/><stop offset="1" stop-color="#137ad0"/></linearGradient></defs>
<rect x="0.3" y="0" width="18.2" height="13" rx="0.8" fill="url(#mg)"/>
<rect x="8.3" y="13" width="2" height="1.5" fill="#b8b8b8"/>
<rect x="5" y="13.6" width="8.5" height="2" rx="1" fill="#c8c8c8"/></svg>
<div class="t" style="left:62.07px;top:261.12px;font-size:15.6px;line-height:17.94px;color:#ffffff;font-weight:400;letter-spacing:-0.785px;transform:scaleX(0.9339);transform-origin:0 0;">This PC</div>
<svg class="s" style="left:8px;top:303px;" width="14" height="10" viewBox="0 0 14 10"><path d="M1.8 2.2 L7.3 7.7 L12.8 2.2" stroke="#ececec" stroke-width="1.4" fill="none"/></svg>
<svg class="s" style="left:37px;top:298px;" width="21" height="21" viewBox="0 0 21 21">
<defs><linearGradient id="ng" x1="0" y1="0" x2="1" y2="1"><stop offset="0" stop-color="#2fc6e6"/><stop offset="1" stop-color="#137ad0"/></linearGradient>
<radialGradient id="gl" cx="0.4" cy="0.35" r="0.7"><stop offset="0" stop-color="#6ab8e0"/><stop offset="1" stop-color="#2b76a8"/></radialGradient></defs>
<rect x="4" y="4.8" width="15.8" height="12.2" rx="0.8" fill="url(#ng)"/>
<rect x="11" y="17" width="1.6" height="1.5" fill="#b8b8b8"/>
<rect x="8" y="17.4" width="8" height="2" rx="1" fill="#c8c8c8"/>
<circle cx="5.6" cy="5.4" r="5.4" fill="#1a1a1a"/>
<circle cx="5.3" cy="5.2" r="5.1" fill="url(#gl)"/>
<path d="M2.5 6.5 Q4 5.5 5.5 7 L6.5 9 Q4.5 9.5 2.5 7.5Z M4 1 Q6 0.6 8 1.5 L7 2.8 Q5.5 2 4 2.2Z M8.8 3 L10 4.5 L9.5 6.5 L8.6 5Z" fill="#e8f2f8" opacity="0.9"/></svg>
<div class="t" style="left:61.04px;top:301.12px;font-size:15.6px;line-height:17.94px;color:#ffffff;font-weight:400;letter-spacing:0.046px;transform:scaleX(1.0040);transform-origin:0 0;">Network</div>
<div class="b" style="left:-2px;top:368.5px;width:170px;height:39px;background:#2d2d2d;border-radius:4px"></div>
<svg class="s" style="left:21px;top:342px;" width="10" height="14" viewBox="0 0 10 14"><path d="M2 1.5 L7.2 6.7 L2 11.9" stroke="#d4d4d4" stroke-width="1.3" fill="none"/></svg>
<svg class="s" style="left:47.5px;top:340px;" width="19" height="16" viewBox="0 0 19 16">
<defs><linearGradient id="mg" x1="0" y1="0" x2="1" y2="1"><stop offset="0" stop-color="#38d4ea"/><stop offset="1" stop-color="#137ad0"/></linearGradient></defs>
<rect x="0.3" y="0" width="18.2" height="13" rx="0.8" fill="url(#mg)"/>
<rect x="8.3" y="13" width="2" height="1.5" fill="#b8b8b8"/>
<rect x="5" y="13.6" width="8.5" height="2" rx="1" fill="#c8c8c8"/></svg>
<div class="t" style="left:70.98px;top:341.12px;font-size:15.6px;line-height:17.94px;color:#ffffff;font-weight:400;letter-spacing:-0.357px;transform:scaleX(0.9762);transform-origin:0 0;">HP11</div>
<svg class="s" style="left:21px;top:382px;" width="10" height="14" viewBox="0 0 10 14"><path d="M2 1.5 L7.2 6.7 L2 11.9" stroke="#d4d4d4" stroke-width="1.3" fill="none"/></svg>
<svg class="s" style="left:47.5px;top:380px;" width="19" height="16" viewBox="0 0 19 16">
<defs><linearGradient id="mg" x1="0" y1="0" x2="1" y2="1"><stop offset="0" stop-color="#38d4ea"/><stop offset="1" stop-color="#137ad0"/></linearGradient></defs>
<rect x="0.3" y="0" width="18.2" height="13" rx="0.8" fill="url(#mg)"/>
<rect x="8.3" y="13" width="2" height="1.5" fill="#b8b8b8"/>
<rect x="5" y="13.6" width="8.5" height="2" rx="1" fill="#c8c8c8"/></svg>
<div class="t" style="left:71.19px;top:381.12px;font-size:15.6px;line-height:17.94px;color:#ffffff;font-weight:400;letter-spacing:0.352px;transform:scaleX(1.0144);transform-origin:0 0;">m4</div>
<div class="b" style="left:177px;top:350px;width:3px;height:97px;background:#9c9c9c;border-radius:1.5px"></div>
<svg class="s" style="left:373px;top:168px;" width="12" height="7" viewBox="0 0 12 7"><path d="M1.2 5.6 L5.4 1.4 L9.6 5.6" stroke="#b8b8b8" stroke-width="1" fill="none"/></svg>
<div class="t" style="left:230.38px;top:175.57px;font-size:16.2px;line-height:18.63px;color:#d9d9d9;font-weight:400;letter-spacing:-0.442px;transform:scaleX(0.9743);transform-origin:0 0;">Name</div>
<div class="b" style="left:533px;top:168px;width:1px;height:32px;background:#393939;"></div>
<div class="t" style="left:540.36px;top:175.57px;font-size:16.2px;line-height:18.63px;color:#d9d9d9;font-weight:400;letter-spacing:-0.109px;transform:scaleX(0.9892);transform-origin:0 0;">Date modified</div>
<div class="b" style="left:713px;top:168px;width:1px;height:32px;background:#393939;"></div>
<div class="t" style="left:721.26px;top:175.57px;font-size:16.2px;line-height:18.63px;color:#d9d9d9;font-weight:400;letter-spacing:-0.805px;transform:scaleX(0.9455);transform-origin:0 0;">Type</div>
<div class="b" style="left:863px;top:168px;width:1px;height:32px;background:#393939;"></div>
<div class="t" style="left:870.39px;top:175.57px;font-size:16.2px;line-height:18.63px;color:#d9d9d9;font-weight:400;letter-spacing:-0.677px;transform:scaleX(0.9475);transform-origin:0 0;">Size</div>
<svg class="s" style="left:217.5px;top:215.5px;" width="19" height="17" viewBox="0 0 19 17">
<defs><linearGradient id="fg0" x1="0" y1="0" x2="1" y2="1"><stop offset="0" stop-color="#ffe48e"/><stop offset="1" stop-color="#ffca38"/></linearGradient></defs>
<path d="M0.5 1.3 Q0.5 0.3 1.5 0.3 H6.6 L8.4 2.1 H17 Q18 2.1 18 3.1 V5 H0.5Z" fill="#f5b80a"/>
<path d="M0.5 3.7 H18 V13 Q18 14 17 14 H1.5 Q0.5 14 0.5 13Z" fill="url(#fg0)"/>
</svg>
<div class="t" style="left:241.92px;top:215.62px;font-size:15.6px;line-height:17.94px;color:#ffffff;font-weight:400;letter-spacing:-0.221px;transform:scaleX(0.9758);transform-origin:0 0;">[AnimeRG] Studio Ghibli Film Collection …</div>
<div class="t" style="left:540.68px;top:215.62px;font-size:15.6px;line-height:17.94px;color:#ffffff;font-weight:400;letter-spacing:-0.216px;transform:scaleX(0.9786);transform-origin:0 0;">1/18/2025 5:56 PM</div>
<div class="t" style="left:720.25px;top:215.62px;font-size:15.6px;line-height:17.94px;color:#ffffff;font-weight:400;letter-spacing:-0.028px;transform:scaleX(0.9966);transform-origin:0 0;">File folder</div>
<svg class="s" style="left:217.5px;top:252.5px;" width="19" height="17" viewBox="0 0 19 17">
<defs><linearGradient id="fg0" x1="0" y1="0" x2="1" y2="1"><stop offset="0" stop-color="#ffe48e"/><stop offset="1" stop-color="#ffca38"/></linearGradient></defs>
<path d="M0.5 1.3 Q0.5 0.3 1.5 0.3 H6.6 L8.4 2.1 H17 Q18 2.1 18 3.1 V5 H0.5Z" fill="#f5b80a"/>
<path d="M0.5 3.7 H18 V13 Q18 14 17 14 H1.5 Q0.5 14 0.5 13Z" fill="url(#fg0)"/>
</svg>
<div class="t" style="left:241.93px;top:252.62px;font-size:15.6px;line-height:17.94px;color:#ffffff;font-weight:400;letter-spacing:-0.332px;transform:scaleX(0.9675);transform-origin:0 0;">[Commie] Gurren Lagann The Movie - Ch…</div>
<div class="t" style="left:540.68px;top:252.62px;font-size:15.6px;line-height:17.94px;color:#ffffff;font-weight:400;letter-spacing:-0.227px;transform:scaleX(0.9775);transform-origin:0 0;">1/10/2025 8:17 PM</div>
<div class="t" style="left:720.25px;top:252.62px;font-size:15.6px;line-height:17.94px;color:#ffffff;font-weight:400;letter-spacing:-0.028px;transform:scaleX(0.9966);transform-origin:0 0;">File folder</div>
<svg class="s" style="left:217.5px;top:289.5px;" width="19" height="17" viewBox="0 0 19 17">
<defs><linearGradient id="fg0" x1="0" y1="0" x2="1" y2="1"><stop offset="0" stop-color="#ffe48e"/><stop offset="1" stop-color="#ffca38"/></linearGradient></defs>
<path d="M0.5 1.3 Q0.5 0.3 1.5 0.3 H6.6 L8.4 2.1 H17 Q18 2.1 18 3.1 V5 H0.5Z" fill="#f5b80a"/>
<path d="M0.5 3.7 H18 V13 Q18 14 17 14 H1.5 Q0.5 14 0.5 13Z" fill="url(#fg0)"/>
</svg>
<div class="t" style="left:241.93px;top:289.62px;font-size:15.6px;line-height:17.94px;color:#ffffff;font-weight:400;letter-spacing:-0.314px;transform:scaleX(0.9690);transform-origin:0 0;">[Commie] Gurren Lagann The Movie - Th…</div>
<div class="t" style="left:540.68px;top:289.62px;font-size:15.6px;line-height:17.94px;color:#ffffff;font-weight:400;letter-spacing:-0.227px;transform:scaleX(0.9775);transform-origin:0 0;">1/10/2025 8:17 PM</div>
<div class="t" style="left:720.25px;top:289.62px;font-size:15.6px;line-height:17.94px;color:#ffffff;font-weight:400;letter-spacing:-0.028px;transform:scaleX(0.9966);transform-origin:0 0;">File folder</div>
<svg class="s" style="left:217.5px;top:326.5px;" width="19" height="17" viewBox="0 0 19 17">
<defs><linearGradient id="fg0" x1="0" y1="0" x2="1" y2="1"><stop offset="0" stop-color="#ffe48e"/><stop offset="1" stop-color="#ffca38"/></linearGradient></defs>
<path d="M0.5 1.3 Q0.5 0.3 1.5 0.3 H6.6 L8.4 2.1 H17 Q18 2.1 18 3.1 V5 H0.5Z" fill="#f5b80a"/>
<path d="M0.5 3.7 H18 V13 Q18 14 17 14 H1.5 Q0.5 14 0.5 13Z" fill="url(#fg0)"/>
</svg>
<div class="t" style="left:242.18px;top:326.62px;font-size:15.6px;line-height:17.94px;color:#ffffff;font-weight:400;letter-spacing:-0.47px;transform:scaleX(0.9550);transform-origin:0 0;">2 Guns (2013)</div>
<div class="t" style="left:540.68px;top:326.62px;font-size:15.6px;line-height:17.94px;color:#ffffff;font-weight:400;letter-spacing:-0.234px;transform:scaleX(0.9768);transform-origin:0 0;">1/16/2019 4:44 PM</div>
<div class="t" style="left:720.25px;top:326.62px;font-size:15.6px;line-height:17.94px;color:#ffffff;font-weight:400;letter-spacing:-0.028px;transform:scaleX(0.9966);transform-origin:0 0;">File folder</div>
<svg class="s" style="left:217.5px;top:363.5px;" width="19" height="17" viewBox="0 0 19 17">
<defs><linearGradient id="fg0" x1="0" y1="0" x2="1" y2="1"><stop offset="0" stop-color="#ffe48e"/><stop offset="1" stop-color="#ffca38"/></linearGradient></defs>
<path d="M0.5 1.3 Q0.5 0.3 1.5 0.3 H6.6 L8.4 2.1 H17 Q18 2.1 18 3.1 V5 H0.5Z" fill="#f5b80a"/>
<path d="M0.5 3.7 H18 V13 Q18 14 17 14 H1.5 Q0.5 14 0.5 13Z" fill="url(#fg0)"/>
</svg>
<div class="t" style="left:241.7px;top:363.62px;font-size:15.6px;line-height:17.94px;color:#ffffff;font-weight:400;letter-spacing:-0.387px;transform:scaleX(0.9593);transform-origin:0 0;">12 Years a Slave (2013)</div>
<div class="t" style="left:541.17px;top:363.62px;font-size:15.6px;line-height:17.94px;color:#ffffff;font-weight:400;letter-spacing:-0.216px;transform:scaleX(0.9785);transform-origin:0 0;">8/11/2018 6:59 PM</div>
<div class="t" style="left:720.25px;top:363.62px;font-size:15.6px;line-height:17.94px;color:#ffffff;font-weight:400;letter-spacing:-0.028px;transform:scaleX(0.9966);transform-origin:0 0;">File folder</div>
<svg class="s" style="left:217.5px;top:400.5px;" width="19" height="17" viewBox="0 0 19 17">
<defs><linearGradient id="fg0" x1="0" y1="0" x2="1" y2="1"><stop offset="0" stop-color="#ffe48e"/><stop offset="1" stop-color="#ffca38"/></linearGradient></defs>
<path d="M0.5 1.3 Q0.5 0.3 1.5 0.3 H6.6 L8.4 2.1 H17 Q18 2.1 18 3.1 V5 H0.5Z" fill="#f5b80a"/>
<path d="M0.5 3.7 H18 V13 Q18 14 17 14 H1.5 Q0.5 14 0.5 13Z" fill="url(#fg0)"/>
</svg>
<div class="t" style="left:242.17px;top:400.62px;font-size:15.6px;line-height:17.94px;color:#ffffff;font-weight:400;letter-spacing:-0.313px;transform:scaleX(0.9677);transform-origin:0 0;">21 Jump Street (2012)</div>
<div class="t" style="left:541.66px;top:400.62px;font-size:15.6px;line-height:17.94px;color:#ffffff;font-weight:400;letter-spacing:-0.276px;transform:scaleX(0.9731);transform-origin:0 0;">4/29/2021 12:49 PM</div>
<div class="t" style="left:720.25px;top:400.62px;font-size:15.6px;line-height:17.94px;color:#ffffff;font-weight:400;letter-spacing:-0.028px;transform:scaleX(0.9966);transform-origin:0 0;">File folder</div>
<svg class="s" style="left:217.5px;top:437.5px;" width="19" height="17" viewBox="0 0 19 17">
<defs><linearGradient id="fg0" x1="0" y1="0" x2="1" y2="1"><stop offset="0" stop-color="#ffe48e"/><stop offset="1" stop-color="#ffca38"/></linearGradient></defs>
<path d="M0.5 1.3 Q0.5 0.3 1.5 0.3 H6.6 L8.4 2.1 H17 Q18 2.1 18 3.1 V5 H0.5Z" fill="#f5b80a"/>
<path d="M0.5 3.7 H18 V13 Q18 14 17 14 H1.5 Q0.5 14 0.5 13Z" fill="url(#fg0)"/>
</svg>
<div class="t" style="left:242.17px;top:437.62px;font-size:15.6px;line-height:17.94px;color:#ffffff;font-weight:400;letter-spacing:-0.313px;transform:scaleX(0.9677);transform-origin:0 0;">22 Jump Street (2014)</div>
<div class="t" style="left:541.66px;top:437.62px;font-size:15.6px;line-height:17.94px;color:#ffffff;font-weight:400;letter-spacing:-0.276px;transform:scaleX(0.9731);transform-origin:0 0;">4/29/2021 12:49 PM</div>
<div class="t" style="left:720.25px;top:437.62px;font-size:15.6px;line-height:17.94px;color:#ffffff;font-weight:400;letter-spacing:-0.028px;transform:scaleX(0.9966);transform-origin:0 0;">File folder</div>
<div class="b" style="left:-3px;top:468px;width:1100px;height:100px;background:#1c1c1c;"></div>
<div class="t" style="left:12px;top:473.81px;font-size:15.4px;line-height:17.71px;color:#e8e8e8;font-weight:400;letter-spacing:0px;">420 items</div>
<div class="b" style="left:87px;top:475px;width:1px;height:20px;background:#bdbdbd;"></div></div>
</body></html>
